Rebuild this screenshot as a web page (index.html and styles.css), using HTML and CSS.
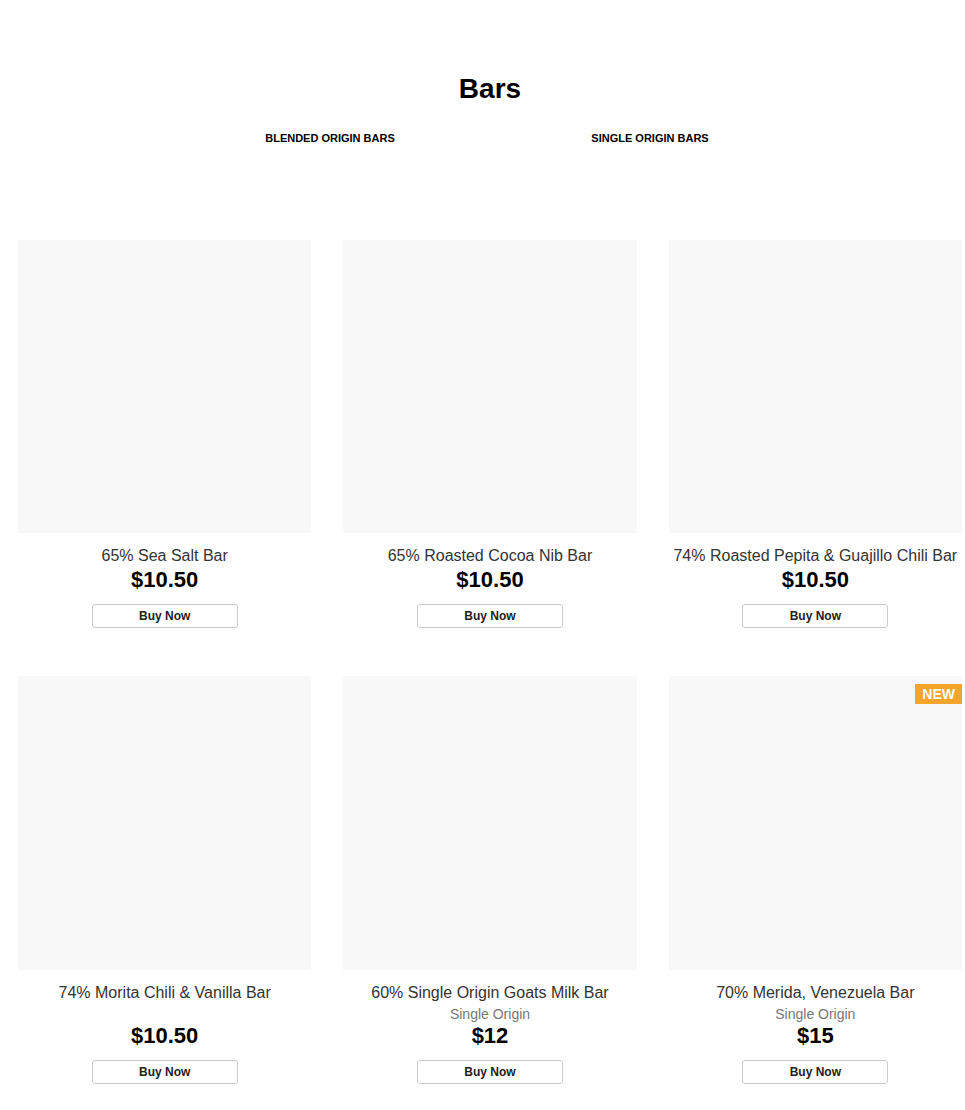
FILE: index.html
```html
<!DOCTYPE html>
<html lang="en">
<head>
    <meta charset="UTF-8">
    <meta name="viewport" content="width=device-width, initial-scale=1.0">
    <title>Bars</title>
    <link rel="stylesheet" href="styles.css">
</head>
<body>
    <div class="page">
        <header class="collection-header">
            <h1>Bars</h1>
            <nav class="collection-tabs">
                <a href="#">BLENDED ORIGIN BARS</a>
                <a href="#">SINGLE ORIGIN BARS</a>
            </nav>
        </header>

        <div class="product-grid">
            <div class="product-card">
                <div class="product-image"></div>
                <p class="product-name">65% Sea Salt Bar</p>
                <p class="product-price">$10.50</p>
                <button class="buy-btn">Buy Now</button>
            </div>
            <div class="product-card">
                <div class="product-image"></div>
                <p class="product-name">65% Roasted Cocoa Nib Bar</p>
                <p class="product-price">$10.50</p>
                <button class="buy-btn">Buy Now</button>
            </div>
            <div class="product-card">
                <div class="product-image"></div>
                <p class="product-name">74% Roasted Pepita &amp; Guajillo Chili Bar</p>
                <p class="product-price">$10.50</p>
                <button class="buy-btn">Buy Now</button>
            </div>

            <div class="product-card">
                <div class="product-image"></div>
                <p class="product-name">74% Morita Chili &amp; Vanilla Bar</p>
                <p class="product-origin"></p>
                <p class="product-price">$10.50</p>
                <button class="buy-btn">Buy Now</button>
            </div>
            <div class="product-card">
                <div class="product-image"></div>
                <p class="product-name">60% Single Origin Goats Milk Bar</p>
                <p class="product-origin">Single Origin</p>
                <p class="product-price">$12</p>
                <button class="buy-btn">Buy Now</button>
            </div>
            <div class="product-card">
                <div class="product-image"></div>
                <span class="badge">NEW</span>
                <p class="product-name">70% Merida, Venezuela Bar</p>
                <p class="product-origin">Single Origin</p>
                <p class="product-price">$15</p>
                <button class="buy-btn">Buy Now</button>
            </div>
        </div>
    </div>
</body>
</html>
```

FILE: styles.css
```css
/* Reset */
* {
    margin: 0;
    padding: 0;
    box-sizing: border-box;
}

body {
    background: #ffffff;
    color: #000000;
    font-family: "Liberation Sans", Arial, sans-serif;
}

.page {
    width: 944px;
    margin-left: 18px;
}

/* Header */
.collection-header {
    padding-top: 71px;
    text-align: center;
}

.collection-header h1 {
    font-size: 28px;
    font-weight: 700;
    line-height: 36px;
}

.collection-tabs {
    display: flex;
    width: 640px;
    margin: 22px auto 0;
}

.collection-tabs a {
    flex: 1;
    color: #000000;
    text-decoration: none;
    font-size: 11px;
    font-weight: 700;
    line-height: 18px;
}

/* Products */
.product-grid {
    display: grid;
    grid-template-columns: repeat(3, 1fr);
    column-gap: 32px;
    row-gap: 48px;
    margin-top: 93px;
}

.product-card {
    position: relative;
    display: flex;
    flex-direction: column;
    align-items: center;
    text-align: center;
}

.product-image {
    width: 100%;
    aspect-ratio: 1 / 1;
    background: #f8f8f8;
}

.badge {
    position: absolute;
    top: 8px;
    right: 0;
    background: #f5a52b;
    color: #ffffff;
    font-size: 14px;
    font-weight: 700;
    line-height: 20px;
    padding: 0 7px;
}

.product-name {
    margin-top: 13px;
    font-size: 16px;
    line-height: 20px;
    color: #333333;
    white-space: nowrap;
}

.product-origin {
    margin-top: 3px;
    height: 17px;
    font-size: 14px;
    line-height: 17px;
    color: #777777;
}

.product-price {
    margin-top: 1px;
    font-size: 22px;
    font-weight: 700;
    line-height: 26px;
}

.product-origin + .product-price {
    margin-top: 0;
}

.buy-btn {
    margin-top: 11px;
    width: 146px;
    height: 24px;
    background: #ffffff;
    border: 1px solid #cccccc;
    border-radius: 3px;
    font-family: inherit;
    font-size: 12px;
    font-weight: 700;
    color: #222222;
    cursor: pointer;
}
```
